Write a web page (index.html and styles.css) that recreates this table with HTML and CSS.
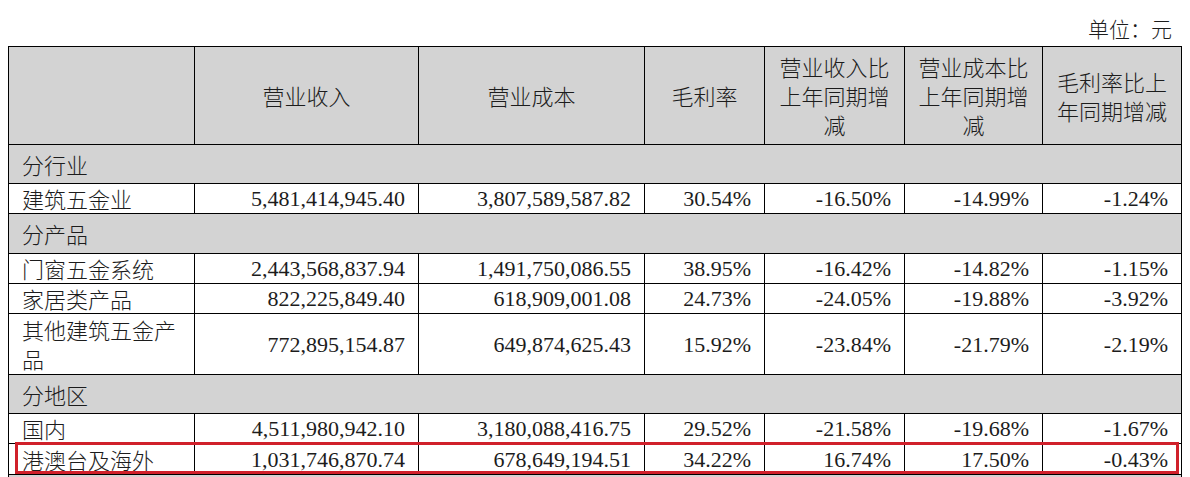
FILE: index.html
```html
<!DOCTYPE html>
<html lang="zh">
<head>
<meta charset="utf-8">
<link rel="stylesheet" href="styles.css">
</head>
<body>
<div class="page">
  <div class="unit">单位：元</div>
  <table class="report">
    <colgroup>
      <col class="c1"><col class="c2"><col class="c3"><col class="c4"><col class="c5"><col class="c6"><col class="c7">
    </colgroup>
    <thead>
      <tr class="head">
        <th></th>
        <th>营业收入</th>
        <th>营业成本</th>
        <th>毛利率</th>
        <th>营业收入比上年同期增减</th>
        <th>营业成本比上年同期增减</th>
        <th>毛利率比上年同期增减</th>
      </tr>
    </thead>
    <tbody>
      <tr class="section"><td colspan="7">分行业</td></tr>
      <tr class="row"><td class="name">建筑五金业</td><td>5,481,414,945.40</td><td>3,807,589,587.82</td><td>30.54%</td><td>-16.50%</td><td>-14.99%</td><td>-1.24%</td></tr>
      <tr class="section s2"><td colspan="7">分产品</td></tr>
      <tr class="row"><td class="name">门窗五金系统</td><td>2,443,568,837.94</td><td>1,491,750,086.55</td><td>38.95%</td><td>-16.42%</td><td>-14.82%</td><td>-1.15%</td></tr>
      <tr class="row"><td class="name">家居类产品</td><td>822,225,849.40</td><td>618,909,001.08</td><td>24.73%</td><td>-24.05%</td><td>-19.88%</td><td>-3.92%</td></tr>
      <tr class="row tall"><td class="name">其他建筑五金产品</td><td>772,895,154.87</td><td>649,874,625.43</td><td>15.92%</td><td>-23.84%</td><td>-21.79%</td><td>-2.19%</td></tr>
      <tr class="section"><td colspan="7">分地区</td></tr>
      <tr class="row"><td class="name">国内</td><td>4,511,980,942.10</td><td>3,180,088,416.75</td><td>29.52%</td><td>-21.58%</td><td>-19.68%</td><td>-1.67%</td></tr>
      <tr class="row last"><td class="name">港澳台及海外</td><td>1,031,746,870.74</td><td>678,649,194.51</td><td>34.22%</td><td>16.74%</td><td>17.50%</td><td>-0.43%</td></tr>
      <tr class="section"><td colspan="7">&nbsp;</td></tr>
    </tbody>
  </table>
  <div class="highlight"></div>
</div>
</body>
</html>
```

FILE: styles.css
```css
html, body {
  margin: 0;
  padding: 0;
  background: #ffffff;
  overflow: hidden;
}

.page {
  position: relative;
  width: 1190px;
  height: 477px;
  padding: 0 9px 0 8px;
  box-sizing: border-box;
  font-family: "Liberation Serif", "Noto Sans CJK SC", serif;
  color: #1c1c1c;
}

.unit {
  height: 46px;
  box-sizing: border-box;
  padding-top: 14px;
  padding-right: 9px;
  line-height: 28px;
  font-size: 21px;
  text-align: right;
  font-family: "Noto Sans CJK SC", sans-serif;
  font-weight: 300;
}

.report {
  width: 1173px;
  border-collapse: collapse;
  table-layout: fixed;
  font-size: 22px;
}

.c1 { width: 186px; }
.c2 { width: 224px; }
.c3 { width: 226px; }
.c4 { width: 120px; }
.c5 { width: 140px; }
.c6 { width: 138px; }
.c7 { width: 139px; }

.report th,
.report td {
  border: 1px solid #000;
  padding: 0 13px;
  line-height: 29px;
}

.head th {
  height: 97px;
  background: #d3d3d3;
  text-align: center;
  font-family: "Noto Sans CJK SC", sans-serif;
  font-weight: 300;
  padding: 0 10px;
}

.section td {
  height: 38px;
  background: #d3d3d3;
  text-align: left;
  font-family: "Noto Sans CJK SC", sans-serif;
  font-weight: 300;
}

.section.s2 td {
  height: 39px;
}

.row td {
  height: 29px;
  text-align: right;
}

.row.tall td {
  height: 60px;
}

.row.last td {
  height: 30px;
}

.row td.name {
  text-align: left;
  font-family: "Noto Sans CJK SC", sans-serif;
  font-weight: 300;
}

.highlight {
  position: absolute;
  left: 15px;
  top: 442px;
  width: 1164px;
  height: 32px;
  box-sizing: border-box;
  border: 3px solid #d0202a;
}
```
